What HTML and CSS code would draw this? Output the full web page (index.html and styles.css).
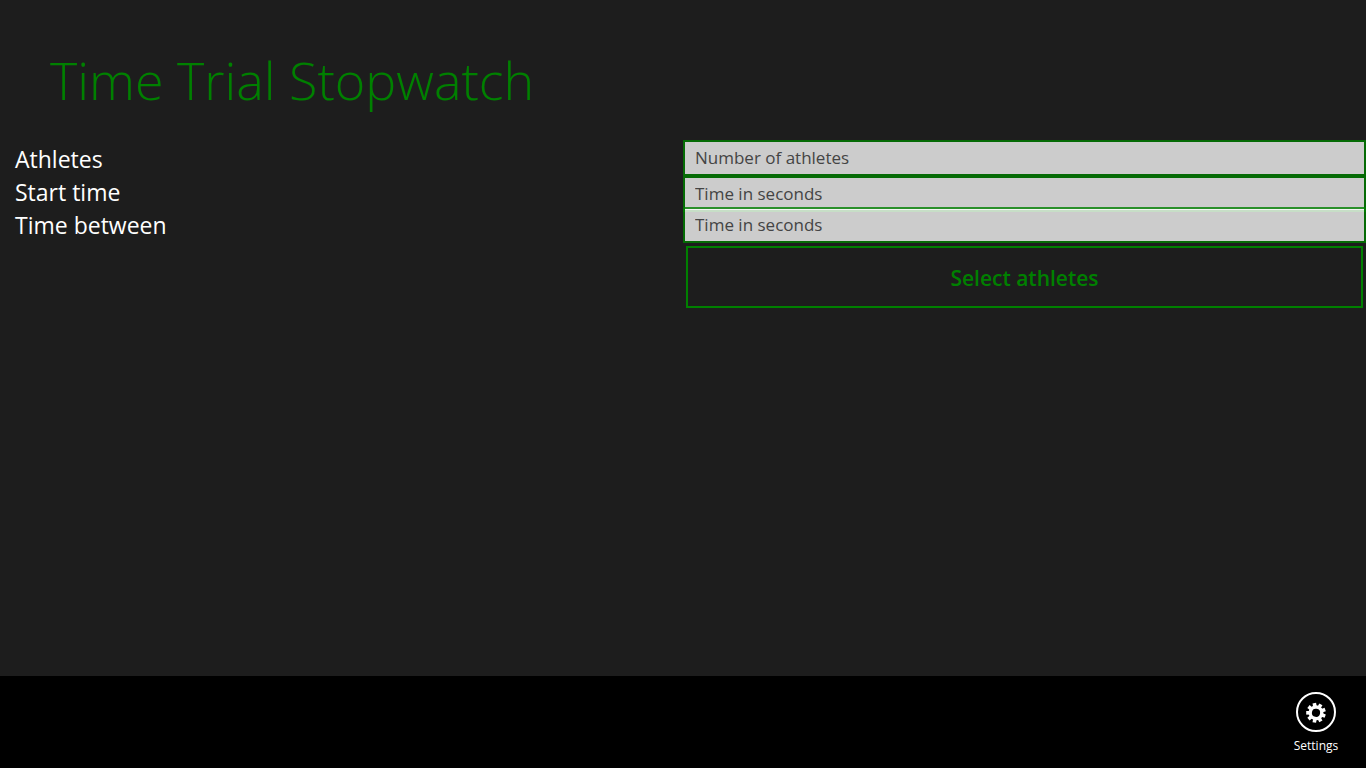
FILE: index.html
```html
<!DOCTYPE html>
<html lang="en">
<head>
<meta charset="utf-8">
<title>Time Trial Stopwatch</title>
<link rel="stylesheet" href="styles.css">
</head>
<body>
<header class="page-header">
  <h1 class="page-title">Time Trial Stopwatch</h1>
</header>
<main class="content">
  <form class="setup">
    <div class="labels">
      <label for="athletes">Athletes</label>
      <label for="start-time">Start time</label>
      <label for="time-between">Time between</label>
    </div>
    <div class="fields">
      <input class="field" id="athletes" type="text" placeholder="Number of athletes">
      <input class="field" id="start-time" type="text" placeholder="Time in seconds">
      <input class="field field-overlap" id="time-between" type="text" placeholder="Time in seconds">
      <button class="select-button" type="button">Select athletes</button>
    </div>
  </form>
</main>
<footer class="app-bar">
  <button class="app-bar-button" type="button">
    <svg class="app-bar-icon" viewBox="0 0 40 40" aria-hidden="true">
      <circle cx="20" cy="20" r="19" fill="none" stroke="#fff" stroke-width="2"/>
      <g transform="translate(20 20.8) rotate(10)" fill="none" stroke="#fff">
        <circle r="5.8" stroke-width="3.4"/>
        <g stroke-width="3.6">
          <path d="M0 6.5V9.8"/>
          <path d="M0 6.5V9.8" transform="rotate(40)"/>
          <path d="M0 6.5V9.8" transform="rotate(80)"/>
          <path d="M0 6.5V9.8" transform="rotate(120)"/>
          <path d="M0 6.5V9.8" transform="rotate(160)"/>
          <path d="M0 6.5V9.8" transform="rotate(200)"/>
          <path d="M0 6.5V9.8" transform="rotate(240)"/>
          <path d="M0 6.5V9.8" transform="rotate(280)"/>
          <path d="M0 6.5V9.8" transform="rotate(320)"/>
        </g>
      </g>
    </svg>
    <span>Settings</span>
  </button>
</footer>
</body>
</html>
```
FILE: styles.css
```css
* {
  box-sizing: border-box;
}

body {
  margin: 0;
  min-height: 100vh;
  display: flex;
  flex-direction: column;
  background: #1d1d1d;
  color: #fff;
  font-family: "Open Sans", "Noto Sans", sans-serif;
}

.page-header {
  padding: 40px 50px 20px;
}

.page-title {
  margin: 0;
  color: #008000;
  font-size: 52px;
  font-weight: 300;
  line-height: 80px;
}

.content {
  flex: 1;
}

.setup {
  display: grid;
  grid-template-columns: 1fr 1fr;
}

.labels {
  display: flex;
  flex-direction: column;
  padding: 3px 15px 0;
  font-size: 23px;
  line-height: 33px;
}

.fields {
  display: flex;
  flex-direction: column;
}

.field {
  width: 100%;
  height: 36px;
  padding: 0 10px 2px;
  border: 2px solid rgba(0, 128, 0, 0.8);
  border-radius: 0;
  background: rgba(255, 255, 255, 0.775);
  background-clip: padding-box;
  color: #1d1d1d;
  font: 17px "Open Sans", "Noto Sans", sans-serif;
}

.field::placeholder {
  color: #444;
  opacity: 1;
}

.field-overlap {
  margin-top: -5px;
}

.select-button {
  margin: 3px;
  height: 62px;
  padding: 2px 6px 0;
  border: 2px solid #008000;
  background: transparent;
  color: #008000;
  font: 600 21px "Open Sans", "Noto Sans", sans-serif;
}

.app-bar {
  display: flex;
  justify-content: flex-end;
  height: 92px;
  padding: 16px 0 0;
  background: #000;
}

.app-bar-button {
  display: flex;
  flex-direction: column;
  align-items: center;
  width: 100px;
  height: 64px;
  padding: 0;
  border: 0;
  background: transparent;
  color: #fff;
  font: 12px/16px "Open Sans", "Noto Sans", sans-serif;
  gap: 6px;
}

.app-bar-icon {
  width: 40px;
  height: 40px;
}
```
